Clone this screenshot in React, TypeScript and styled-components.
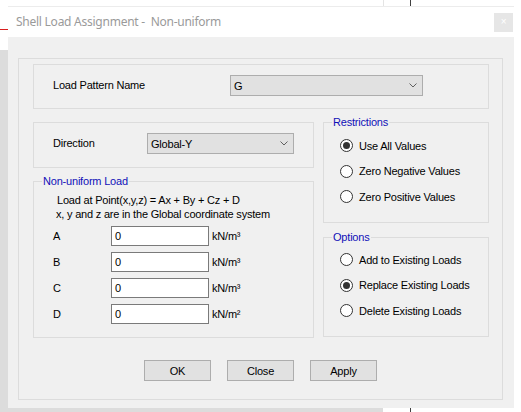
import React from "react";
import styled, { createGlobalStyle } from "styled-components";

const Global = createGlobalStyle`
  html, body { margin: 0; padding: 0; background: #ffffff; }
  body {
    font-family: "Liberation Sans", Arial, sans-serif;
    font-size: 11px;
    letter-spacing: -0.2px;
    color: #000;
  }
  * { box-sizing: border-box; }
`;

const Desktop = styled.div`
  position: relative;
  width: 521px;
  height: 412px;
  overflow: hidden;
  background: #ffffff;
`;

const BackdropBlock = styled.div<{ $l: number; $t: number; $w: number; $h: number; $c: string }>`
  position: absolute;
  left: ${(p) => p.$l}px;
  top: ${(p) => p.$t}px;
  width: ${(p) => p.$w}px;
  height: ${(p) => p.$h}px;
  background: ${(p) => p.$c};
`;

const Window = styled.div`
  position: absolute;
  left: 8px;
  top: 6px;
  width: 506px;
  height: 402px;
  border-top: 1px solid #ececec;
  display: flex;
  flex-direction: column;
  background: #ffffff;
`;

const TitleBar = styled.div`
  height: 30px;
  flex: none;
  display: flex;
  align-items: center;
  justify-content: space-between;
  padding: 0 1px 0 8px;
  background: #ffffff;
`;

const TitleText = styled.span`
  font-family: "Noto Sans", "Open Sans", sans-serif;
  font-size: 12px;
  letter-spacing: -0.25px;
  color: #9a9a9a;
  margin-top: -1px;
`;

const CloseBox = styled.div`
  width: 19px;
  height: 19px;
  background: #e6e6e6;
  color: #ffffff;
  display: flex;
  align-items: center;
  justify-content: center;
  font-size: 10px;
  line-height: 1;
`;

const Body = styled.div`
  flex: 1;
  background: #f0f0f0;
  padding: 21px 12px 8px 10px;
`;

const OuterPanel = styled.div`
  width: 485px;
  height: 342px;
  border: 1px solid #dcdcdc;
  padding-top: 5px;
  display: flex;
  flex-direction: column;
`;

const Content = styled.div`
  padding-left: 14px;
  display: flex;
  flex-direction: column;
`;

const FieldPanel = styled.div<{ $w: number; $h: number; $labelW: number }>`
  width: ${(p) => p.$w}px;
  height: ${(p) => p.$h}px;
  border: 1px solid #dcdcdc;
  padding: 10px 0 0 19px;
  display: flex;
  align-items: flex-start;
  & > span {
    width: ${(p) => p.$labelW}px;
    line-height: 21px;
  }
`;

const Combo = styled.div<{ $w: number }>`
  width: ${(p) => p.$w}px;
  height: 21px;
  border: 1px solid #adadad;
  background: #e1e1e1;
  display: flex;
  align-items: center;
  justify-content: space-between;
  padding: 0 5px 0 3px;
`;

const MainRow = styled.div`
  display: flex;
  gap: 9px;
  margin-top: 7px;
`;

const LeftCol = styled.div`
  width: 281px;
  padding-top: 6px;
  display: flex;
  flex-direction: column;
`;

const RightCol = styled.div`
  width: 166px;
  display: flex;
  flex-direction: column;
`;

const GroupWrap = styled.div<{ $mt: number }>`
  position: relative;
  padding-top: 6px;
  margin-top: ${(p) => p.$mt}px;
`;

const Legend = styled.span`
  position: absolute;
  left: 9px;
  top: 0;
  line-height: 13px;
  padding: 0 1px;
  background: #f0f0f0;
  color: #1010b8;
`;

const GroupBox = styled.div<{ $h: number; $pt: number; $pl: number }>`
  height: ${(p) => p.$h}px;
  border: 1px solid #dcdcdc;
  padding: ${(p) => p.$pt}px 0 0 ${(p) => p.$pl}px;
  display: flex;
  flex-direction: column;
`;

const InfoLine = styled.div<{ $indent: number }>`
  line-height: 14px;
  padding-left: ${(p) => p.$indent}px;
`;

const CoefRows = styled.div`
  display: flex;
  flex-direction: column;
  gap: 6px;
  margin-top: 5px;
`;

const CoefRow = styled.div`
  display: flex;
  align-items: center;
  height: 20px;
  padding-left: 19px;
`;

const CoefLabel = styled.span`
  width: 58px;
`;

const ValueInput = styled.div`
  width: 98px;
  height: 20px;
  border: 1px solid #7a7a7a;
  background: #ffffff;
  padding-left: 3px;
  line-height: 18px;
`;

const Unit = styled.span`
  margin-left: 3px;
`;

const RadioList = styled.div`
  display: flex;
  flex-direction: column;
  gap: 12.5px;
`;

const RadioItem = styled.div`
  display: flex;
  align-items: center;
  height: 13px;
  gap: 6px;
`;

const RadioCircle = styled.span<{ $on: boolean }>`
  width: 13px;
  height: 13px;
  border-radius: 50%;
  border: 1px solid #333333;
  background: #ffffff;
  display: flex;
  align-items: center;
  justify-content: center;
  flex: none;
  &::after {
    content: "";
    display: ${(p) => (p.$on ? "block" : "none")};
    width: 7px;
    height: 7px;
    border-radius: 50%;
    background: #333333;
  }
`;

const ButtonRow = styled.div`
  display: flex;
  justify-content: center;
  gap: 16px;
  margin-top: 22px;
`;

const Button = styled.div`
  width: 67px;
  height: 21px;
  border: 1px solid #adadad;
  background: #e1e1e1;
  display: flex;
  align-items: center;
  justify-content: center;
`;

const Chevron = () => (
  <svg width="8" height="5" viewBox="0 0 8 5">
    <polyline points="0.5,0.5 4,4 7.5,0.5" fill="none" stroke="#606060" strokeWidth="1" />
  </svg>
);

const Radio = ({ label, on }: { label: string; on?: boolean }) => (
  <RadioItem>
    <RadioCircle $on={!!on} />
    <span>{label}</span>
  </RadioItem>
);

const coefs = [
  { k: "A", u: "kN/m³" },
  { k: "B", u: "kN/m³" },
  { k: "C", u: "kN/m³" },
  { k: "D", u: "kN/m²" },
];

export default function App() {
  return (
    <Desktop>
      <Global />
      <BackdropBlock $l={0} $t={50} $w={8} $h={362} $c="#dcdcdc" />
      <BackdropBlock $l={0} $t={408} $w={383} $h={4} $c="#dcdcdc" />
      <BackdropBlock $l={0} $t={29} $w={8} $h={1} $c="#d81e1e" />
      <BackdropBlock $l={383} $t={0} $w={1} $h={6} $c="#e4e4e4" />
      <BackdropBlock $l={410} $t={0} $w={1} $h={6} $c="#404040" />
      <BackdropBlock $l={410} $t={408} $w={1} $h={4} $c="#404040" />
      <Window>
        <TitleBar>
          <TitleText>Shell Load Assignment -&nbsp; Non-uniform</TitleText>
          <CloseBox>×</CloseBox>
        </TitleBar>
        <Body>
          <OuterPanel>
            <Content>
              <FieldPanel $w={456} $h={45} $labelW={177}>
                <span>Load Pattern Name</span>
                <Combo $w={193}>
                  <span>G</span>
                  <Chevron />
                </Combo>
              </FieldPanel>
              <MainRow>
                <LeftCol>
                  <FieldPanel $w={281} $h={46} $labelW={94}>
                    <span>Direction</span>
                    <Combo $w={147}>
                      <span>Global-Y</span>
                      <Chevron />
                    </Combo>
                  </FieldPanel>
                  <GroupWrap $mt={7}>
                    <Legend>Non-uniform Load</Legend>
                    <GroupBox $h={157} $pt={11} $pl={0}>
                      <InfoLine $indent={23}>Load at Point(x,y,z) = Ax + By + Cz + D</InfoLine>
                      <InfoLine $indent={22}>x, y and z are in the Global coordinate system</InfoLine>
                      <CoefRows>
                        {coefs.map((c) => (
                          <CoefRow key={c.k}>
                            <CoefLabel>{c.k}</CoefLabel>
                            <ValueInput>0</ValueInput>
                            <Unit>{c.u}</Unit>
                          </CoefRow>
                        ))}
                      </CoefRows>
                    </GroupBox>
                  </GroupWrap>
                </LeftCol>
                <RightCol>
                  <GroupWrap $mt={0}>
                    <Legend>Restrictions</Legend>
                    <GroupBox $h={101} $pt={16} $pl={16}>
                      <RadioList>
                        <Radio label="Use All Values" on />
                        <Radio label="Zero Negative Values" />
                        <Radio label="Zero Positive Values" />
                      </RadioList>
                    </GroupBox>
                  </GroupWrap>
                  <GroupWrap $mt={8}>
                    <Legend>Options</Legend>
                    <GroupBox $h={100} $pt={15} $pl={16}>
                      <RadioList>
                        <Radio label="Add to Existing Loads" />
                        <Radio label="Replace Existing Loads" on />
                        <Radio label="Delete Existing Loads" />
                      </RadioList>
                    </GroupBox>
                  </GroupWrap>
                </RightCol>
              </MainRow>
            </Content>
            <ButtonRow>
              <Button>OK</Button>
              <Button>Close</Button>
              <Button>Apply</Button>
            </ButtonRow>
          </OuterPanel>
        </Body>
      </Window>
    </Desktop>
  );
}
